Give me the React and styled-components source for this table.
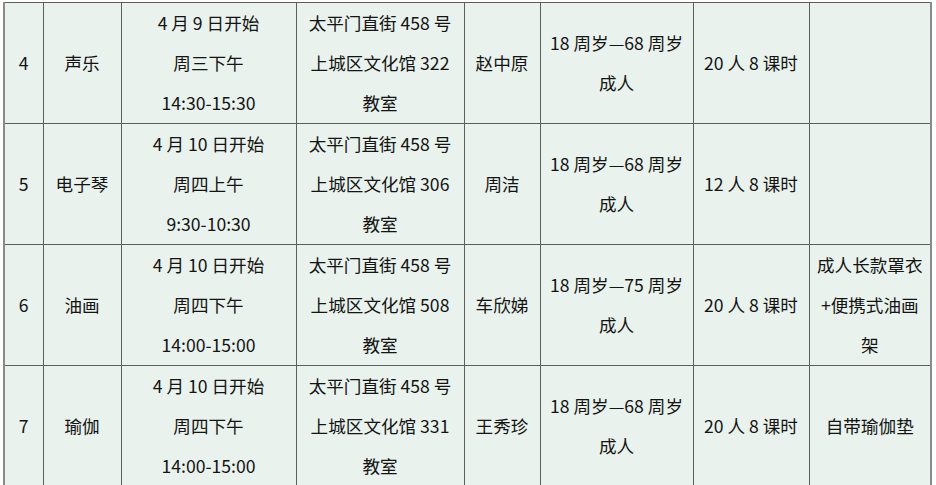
import React from "react";
import styled, { createGlobalStyle } from "styled-components";

const GlobalStyle = createGlobalStyle`
	html, body {
		margin: 0;
		padding: 0;
		background: #ffffff;
	}
	body {
		font-family: "Noto Sans CJK SC", "Noto Sans", sans-serif;
	}
`;

const SCPage = styled.div`
	padding: 2px 0 0 3px;
	width: 936px;
	height: 485px;
	overflow: hidden;
	box-sizing: border-box;
`;

const SCTable = styled.table`
	border-collapse: collapse;
	table-layout: fixed;
	width: 928px;
	background: #e9f2ec;
	color: #141414;
	font-size: 17.6px;
	border-top: 1px solid #9a9a9a;
	border-left: 2px solid #8a8a8a;
	border-right: 2px solid #8a8a8a;
`;

const SCCell = styled.td`
	height: 120px;
	padding: 0 ${props => props.$pad || 4}px;
	border: 1px solid #5e5e5e;
	text-align: center;
	vertical-align: middle;
	line-height: 40px;
	white-space: nowrap;
`;

const SCLine = styled.div`
	line-height: 40px;
`;

const COLUMNS = [39, 78, 175, 168, 76, 153, 116, 122];

const ROWS = [
	{
		no: "4",
		course: "声乐",
		time: ["4 月 9 日开始", "周三下午", "14:30-15:30"],
		place: ["太平门直街 458 号", "上城区文化馆 322", "教室"],
		teacher: "赵中原",
		age: ["18 周岁—68 周岁", "成人"],
		size: "20 人 8 课时",
		note: []
	},
	{
		no: "5",
		course: "电子琴",
		time: ["4 月 10 日开始", "周四上午", "9:30-10:30"],
		place: ["太平门直街 458 号", "上城区文化馆 306", "教室"],
		teacher: "周洁",
		age: ["18 周岁—68 周岁", "成人"],
		size: "12 人 8 课时",
		note: []
	},
	{
		no: "6",
		course: "油画",
		time: ["4 月 10 日开始", "周四下午", "14:00-15:00"],
		place: ["太平门直街 458 号", "上城区文化馆 508", "教室"],
		teacher: "车欣娣",
		age: ["18 周岁—75 周岁", "成人"],
		size: "20 人 8 课时",
		note: ["成人长款罩衣", "+便携式油画", "架"]
	},
	{
		no: "7",
		course: "瑜伽",
		time: ["4 月 10 日开始", "周四下午", "14:00-15:00"],
		place: ["太平门直街 458 号", "上城区文化馆 331", "教室"],
		teacher: "王秀珍",
		age: ["18 周岁—68 周岁", "成人"],
		size: "20 人 8 课时",
		note: ["自带瑜伽垫"]
	}
];

function Lines({ items }) {
	return items.map((text, key) => <SCLine key={key}>{text}</SCLine>);
}

function App() {
	return (
		<>
			<GlobalStyle />
			<SCPage>
				<SCTable>
					<colgroup>
						{COLUMNS.map((width, key) => (
							<col key={`col_${key}`} style={{ width }} />
						))}
					</colgroup>
					<tbody>
						{ROWS.map(row => (
							<tr key={row.no}>
								<SCCell>{row.no}</SCCell>
								<SCCell>{row.course}</SCCell>
								<SCCell>
									<Lines items={row.time} />
								</SCCell>
								<SCCell>
									<Lines items={row.place} />
								</SCCell>
								<SCCell>{row.teacher}</SCCell>
								<SCCell>
									<Lines items={row.age} />
								</SCCell>
								<SCCell>{row.size}</SCCell>
								<SCCell $pad={2}>
									<Lines items={row.note} />
								</SCCell>
							</tr>
						))}
					</tbody>
				</SCTable>
			</SCPage>
		</>
	);
}

export default App;
